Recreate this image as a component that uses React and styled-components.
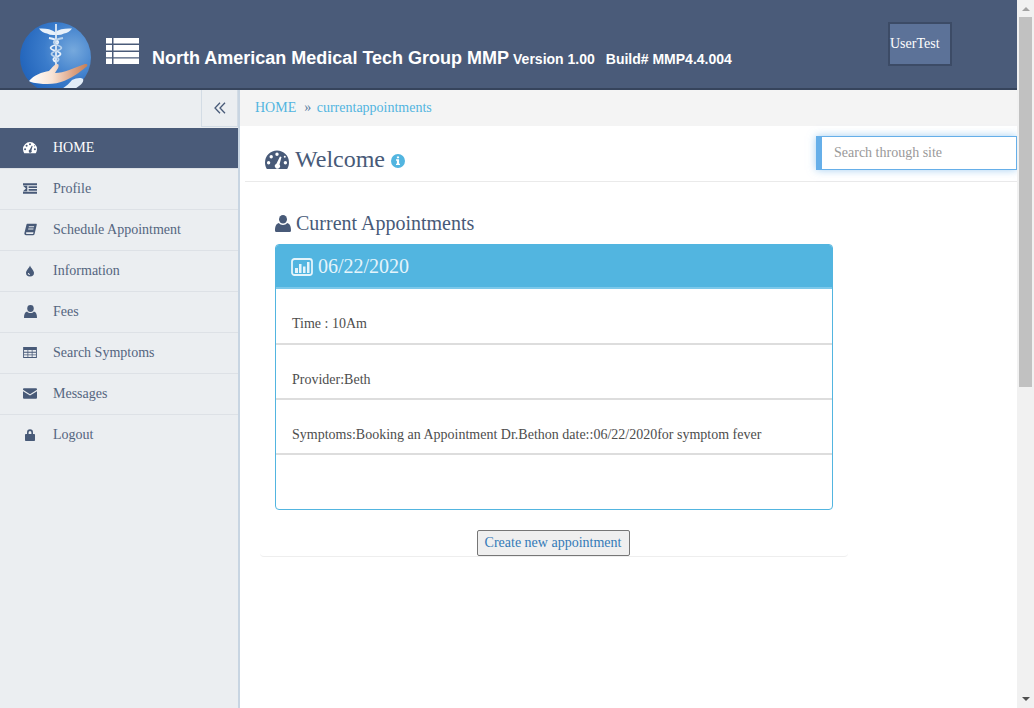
import React from 'react';
import styled, { createGlobalStyle } from 'styled-components';

const hole = (x, y, r) => `M${x - r} ${y}a${r} ${r} 0 1 0 ${2 * r} 0a${r} ${r} 0 1 0 ${-2 * r} 0z`;

const tableHoles = () => {
  let d = 'M0 0h15v12H0z';
  [3.4, 6.2, 9].forEach((y) => {
    [1, 5.6, 10.2].forEach((x) => {
      d += `M${x} ${y}h3.8v1.9h-3.8z`;
    });
  });
  return d;
};

const Gauge = ({ size }) => (
  <svg width={size} height={size * 0.82} viewBox="0 0 24 19.7" fill="currentColor">
    <path
      fillRule="evenodd"
      d={
        'M12 .5A12 12 0 0 0 0 12.5c0 2.6.8 5 2.1 7h19.8c1.3-2 2.1-4.4 2.1-7A12 12 0 0 0 12 .5z' +
        hole(3.6, 12.8, 1.7) +
        hole(6.2, 6.8, 1.7) +
        hole(12, 4.3, 1.7) +
        hole(19.8, 6.8, 1) +
        hole(20.4, 12.8, 1.7) +
        'M15 6.6l1.5.5-2 7.4a2.6 2.6 0 1 1-3.1-.8z'
      }
    />
  </svg>
);

const Indent = () => (
  <svg width="15" height="11" viewBox="0 0 15 11" fill="currentColor">
    <path d="M0 0h15v2H0zM6 3h9v2H6zM6 6h9v2H6zM0 9h15v2H0zM0 2.5h4.6v6H0l3.2-3z" />
  </svg>
);

const Book = () => (
  <svg width="13" height="13" viewBox="0 0 16 16" fill="currentColor">
    <path
      fillRule="evenodd"
      d="M4 1h10.800c.8 0 1.100.6.9 1.300L13 13.500c-.2.8-.8 1.500-1.700 1.500H2.500C1 15 .1 13.700.5 12.200L3 2c.2-.6.5-1 1-1zM6 4l-.3 1.200h6.500L12.500 4zM5.300 6.800L5 8h6.500l.3-1.200zM3.200 11.500c-.8 0-1.300 2 0 2h8l.5-2z"
    />
  </svg>
);

const Tint = () => (
  <svg width="8" height="12" viewBox="0 0 10 14" fill="currentColor">
    <path fillRule="evenodd" d="M5 0c.5 2.500 5 6 5 9.300A5 4.700 0 0 1 0 9.300C0 6 4.500 2.500 5 0zM2.300 9.500a2.600 2.600 0 0 0 2.600 2.600v-1.300a1.300 1.300 0 0 1-1.300-1.300z" />
  </svg>
);

const User = ({ size }) => (
  <svg width={size} height={size * 1.06} viewBox="0 0 16 17" fill="currentColor">
    <ellipse cx="8" cy="4.3" rx="4" ry="4.3" />
    <path d="M1.300 17C.5 17 0 16.500 0 15.500c0-3.500.8-6.800 3.800-7.500 1 1.300 2.500 2 4.200 2s3.200-.7 4.200-2c3 .7 3.800 4 3.800 7.500 0 1-.5 1.500-1.300 1.500z" />
  </svg>
);

const TableIcon = () => (
  <svg width="14" height="11" viewBox="0 0 15 12" fill="currentColor">
    <path fillRule="evenodd" d={tableHoles()} />
  </svg>
);

const Envelope = () => (
  <svg width="15" height="11" viewBox="0 0 15 11" fill="currentColor">
    <path d="M1 0h13c.6 0 1 .4 1 1v.6L7.500 6.200 0 1.600V1c0-.6.4-1 1-1zM0 3l7.500 4.600L15 3v7c0 .6-.4 1-1 1H1c-.6 0-1-.4-1-1z" />
  </svg>
);

const Lock = () => (
  <svg width="10" height="12" viewBox="0 0 10 12" fill="currentColor">
    <path
      fillRule="evenodd"
      d="M2 5V3.500a3 3.300 0 0 1 6 0V5h1.200c.5 0 .8.3.8.8v5.400c0 .5-.3.8-.8.8H.8c-.5 0-.8-.3-.8-.8V5.800c0-.5.3-.8.8-.8zM3.600 5h2.800V3.500a1.400 1.500 0 0 0-2.800 0z"
    />
  </svg>
);

const Info = () => (
  <svg width="14" height="14" viewBox="0 0 14 14" fill="#52b5e0">
    <path
      fillRule="evenodd"
      d="M7 0a7 7 0 1 0 0 14A7 7 0 0 0 7 0zM5.900 2.400h2.200v1.900H5.900zM5 5.300h3.100v4.400H9v1.400H5V9.700h.9V6.700H5z"
    />
  </svg>
);

const ChevronsLeft = () => (
  <svg width="12" height="12" viewBox="0 0 12 12" fill="none" stroke="currentColor" strokeWidth="1.3">
    <path d="M6 .8L1 6l5 5.200M11 .8L6 6l5 5.200" />
  </svg>
);

const ThList = () => (
  <MenuSvg viewBox="0 0 33 26" fill="#fff">
    <path d="M0 0h6v5.600H0zM7.500 0H33v5.600H7.500zM0 7h6v5.600H0zM7.500 7H33v5.600H7.500zM0 14h6v5.200H0zM7.500 14H33v5.200H7.500zM0 20.500h6V26H0zM7.500 20.500H33V26H7.500z" />
  </MenuSvg>
);

const ChartBox = () => (
  <svg width="22" height="18" viewBox="0 0 22 18" fill="none">
    <rect x="1" y="1" width="20" height="16" rx="2.5" stroke="currentColor" strokeWidth="1.8" />
    <path d="M4 10h3v5H4zM8 6h2.500v9H8zM12 8.500h2.500V15H12zM16 4h2.500v11H16z" fill="currentColor" />
  </svg>
);

const Logo = () => (
  <LogoSvg viewBox="0 0 71 71" aria-label="logo">
    <defs>
      <radialGradient id="sky" cx="75%" cy="40%" r="75%">
        <stop offset="0" stopColor="#76a9dd" />
        <stop offset="0.55" stopColor="#3b7ccb" />
        <stop offset="1" stopColor="#2466bc" />
      </radialGradient>
      <linearGradient id="skin" x1="0" y1="0" x2="1" y2="0">
        <stop offset="0" stopColor="#ffffff" />
        <stop offset="0.4" stopColor="#f8e3d5" />
        <stop offset="0.75" stopColor="#dca384" />
        <stop offset="1" stopColor="#c47f58" />
      </linearGradient>
    </defs>
    <circle cx="35.5" cy="35.5" r="35.5" fill="url(#sky)" />
    <path d="M52 58c4-2 9-3 11-1 1 2-1 5-4 7-5 4-10 6-15 6-3 0-5 0-7-1 6-2 11-6 15-11z" fill="#e3edf8" />
    <path d="M19 6.500c6-.5 12 .5 16 3.500 4-3 11-4 17-3.500-2 3-5 4.500-8 5-2 1-4 1.500-6 1.500h-5c-2 0-4-.5-6-1.500-3-.5-6-2-8-5z" fill="#e9f1fa" />
    <path d="M36 2v41" stroke="#dfe9f5" strokeWidth="1.8" />
    <path d="M29 16c11 2 11 5 6 7-6 2-6 4 1 6 6 2 6 4 0 6-4 1.500-3 3.500 0 5" fill="none" stroke="#eaf2fb" strokeWidth="1.8" />
    <path d="M43 16c-11 2-11 5-6 7 6 2 6 4-1 6-6 2-6 4 0 6 4 1.500 3 3.500 0 5" fill="none" stroke="#b9d2ec" strokeWidth="1.8" />
    <path
      d="M9 59C14 53 22 50 29 49c3-3 5-7 9-7 2 2-1 6-3 9 9 0 19-5 30-9 3-.5 3 2 1 3-6 5-15 12-25 15-6 2-12 2-18 2-5-.5-11-1-14-3z"
      fill="url(#skin)"
    />
  </LogoSvg>
);

const menu = [
  { label: 'HOME', icon: <Gauge size={16} />, active: true },
  { label: 'Profile', icon: <Indent /> },
  { label: 'Schedule Appointment', icon: <Book /> },
  { label: 'Information', icon: <Tint /> },
  { label: 'Fees', icon: <User size={13} /> },
  { label: 'Search Symptoms', icon: <TableIcon /> },
  { label: 'Messages', icon: <Envelope /> },
  { label: 'Logout', icon: <Lock /> },
];

const rows = [
  'Time : 10Am',
  'Provider:Beth',
  'Symptoms:Booking an Appointment Dr.Bethon date::06/22/2020for symptom fever',
  '',
];

const App = () => {
  return (
    <Page>
      <GlobalStyle />
      <Main>
        <Header>
          <Logo />
          <ThList />
          <Title>
            North American Medical Tech Group MMP
            <Version>Version 1.00</Version>
            <Version $wide>Build# MMP4.4.004</Version>
          </Title>
          <UserBox>UserTest</UserBox>
        </Header>
        <Body>
          <Sidebar>
            <ToggleRow>
              <ToggleButton>
                <ChevronsLeft />
              </ToggleButton>
            </ToggleRow>
            <Nav>
              {menu.map((item) => (
                <NavItem key={item.label} $active={item.active}>
                  <NavIcon $active={item.active}>{item.icon}</NavIcon>
                  {item.label}
                </NavItem>
              ))}
            </Nav>
          </Sidebar>
          <Content>
            <Breadcrumb>
              <span>HOME</span>
              <Sep>»</Sep>
              <span>currentappointments</span>
            </Breadcrumb>
            <PageHead>
              <PageTitle>
                <Gauge size={24} />
                <span>Welcome</span>
                <InfoWrap>
                  <Info />
                </InfoWrap>
              </PageTitle>
              <SearchBox placeholder="Search through site" />
            </PageHead>
            <Section>
              <SectionTitle>
                <User size={16} />
                Current Appointments
              </SectionTitle>
              <Card>
                <CardHead>
                  <ChartBox />
                  06/22/2020
                </CardHead>
                {rows.map((row, i) => (
                  <CardRow key={i} $last={i === rows.length - 1}>
                    {row}
                  </CardRow>
                ))}
              </Card>
              <Actions>
                <CreateButton>Create new appointment</CreateButton>
              </Actions>
            </Section>
          </Content>
        </Body>
      </Main>
      <Scrollbar>
        <ArrowUp />
        <Thumb />
        <ArrowDown />
      </Scrollbar>
    </Page>
  );
};

const GlobalStyle = createGlobalStyle`
  html, body {
    margin: 0;
    padding: 0;
    height: 708px;
    overflow: hidden;
    background: #fff;
  }
  * {
    box-sizing: border-box;
  }
`;

const Page = styled.div`
  display: flex;
  width: 1034px;
  height: 708px;
  font-family: "Liberation Serif", "Times New Roman", serif;
  font-size: 14px;
  color: #485a78;
  overflow: hidden;
`;

const Main = styled.div`
  flex: 1;
  min-width: 0;
  display: flex;
  flex-direction: column;
`;

const Header = styled.header`
  flex: none;
  height: 90px;
  display: flex;
  align-items: flex-start;
  overflow: hidden;
  background: #4a5b79;
  border-bottom: 2px solid #36445c;
`;

const LogoSvg = styled.svg`
  width: 71px;
  height: 71px;
  margin: 22px 0 0 20px;
  flex: none;
`;

const MenuSvg = styled.svg`
  width: 33px;
  height: 26px;
  margin: 38px 0 0 15px;
  flex: none;
`;

const Title = styled.div`
  margin: 48px 0 0 13px;
  width: 736px;
  flex: none;
  font-family: "Liberation Sans", Arial, sans-serif;
  font-weight: bold;
  font-size: 18px;
  line-height: 21px;
  color: #fff;
  white-space: nowrap;
`;

const Version = styled.span`
  font-size: 14px;
  margin-left: ${(p) => (p.$wide ? '11px' : '4px')};
`;

const UserBox = styled.div`
  width: 64px;
  height: 44px;
  margin: 22px 0 0 0;
  flex: none;
  display: flex;
  align-items: center;
  background: #5c7298;
  border: 2px solid #3c4b66;
  color: #fff;
  font-size: 14px;
`;

const Body = styled.div`
  flex: 1;
  display: flex;
  min-height: 0;
`;

const Sidebar = styled.aside`
  flex: 0 0 240px;
  background: #ebeef1;
  border-right: 2px solid #c8d5e2;
`;

const ToggleRow = styled.div`
  height: 38px;
  display: flex;
  justify-content: flex-end;
`;

const ToggleButton = styled.div`
  width: 37px;
  height: 37px;
  display: flex;
  align-items: center;
  justify-content: center;
  border: 1px solid #d3dce5;
  border-top: none;
  color: #485a78;
`;

const Nav = styled.nav`
  display: flex;
  flex-direction: column;
`;

const NavItem = styled.div`
  height: 41px;
  display: flex;
  align-items: center;
  padding-bottom: 1px;
  background: ${(p) => (p.$active ? '#4a5b79' : 'transparent')};
  color: ${(p) => (p.$active ? '#fff' : '#54657f')};
  border-bottom: 1px solid #dde1e6;
  &:last-child {
    border-bottom: none;
  }
`;

const NavIcon = styled.span`
  width: 53px;
  padding-left: 23px;
  padding-right: 16px;
  display: flex;
  align-items: center;
  justify-content: center;
  flex: none;
  color: ${(p) => (p.$active ? '#fff' : '#485a78')};
`;

const Content = styled.main`
  flex: 1;
  min-width: 0;
  display: flex;
  flex-direction: column;
`;

const Breadcrumb = styled.div`
  height: 36px;
  padding-left: 15px;
  display: flex;
  align-items: center;
  background: #f4f4f4;
  color: #52b5e0;
  font-size: 14px;
`;

const Sep = styled.span`
  margin: 0 5.5px 0 8px;
  color: #5d7fa0;
`;

const PageHead = styled.div`
  height: 56px;
  margin-left: 5px;
  padding-left: 20px;
  display: flex;
  align-items: flex-start;
  justify-content: space-between;
  border-bottom: 1px solid #eaeaea;
`;

const PageTitle = styled.h1`
  margin: 20px 0 0;
  display: flex;
  align-items: center;
  gap: 6px;
  font-weight: normal;
  font-size: 24px;
  line-height: 27px;
  color: #485a78;
`;

const InfoWrap = styled.span`
  display: flex;
  margin-top: 2px;
`;

const SearchBox = styled.input`
  width: 201px;
  height: 34px;
  margin-top: 10px;
  padding: 0 12px;
  border: 1px solid #66afe9;
  border-left: 6px solid #66afe9;
  box-shadow: 0 0 8px rgba(102, 175, 233, 0.6);
  outline: none;
  font-family: inherit;
  font-size: 14px;
  color: #555;
  &::placeholder {
    color: #999;
    opacity: 1;
  }
`;

const Section = styled.section`
  margin-left: 20px;
  width: 588px;
  padding: 30px 15px 0 15px;
  height: 375px;
  border-bottom: 1px solid #eeeeee;
  border-radius: 0 0 4px 4px;
`;

const SectionTitle = styled.h2`
  margin: 0 0 9px;
  display: flex;
  align-items: center;
  gap: 5px;
  font-weight: normal;
  font-size: 20px;
  line-height: 23px;
  color: #485a78;
`;

const Card = styled.div`
  width: 558px;
  height: 266px;
  border: 1px solid #52b5e0;
  border-radius: 4px;
  overflow: hidden;
`;

const CardHead = styled.div`
  height: 45px;
  margin: -1px -1px 0;
  padding: 2px 0 0 16px;
  display: flex;
  align-items: center;
  gap: 5px;
  background: #52b5e0;
  border-bottom: 2px solid #7cc8ea;
  color: #e4f4fb;
  font-size: 20px;
`;

const CardRow = styled.div`
  height: ${(p) => (p.$last ? '54px' : '55px')};
  padding: 26px 16px 0;
  font-size: 14px;
  line-height: 17px;
  color: #4d4d4d;
  border-bottom: ${(p) => (p.$last ? 'none' : '2px solid #dddddd')};
  &:nth-child(2) {
    height: 56px;
  }
`;

const Actions = styled.div`
  margin-top: 20px;
  padding-right: 2px;
  display: flex;
  justify-content: center;
`;

const CreateButton = styled.button`
  height: 26px;
  width: 153px;
  padding: 0;
  background: #efefef;
  border: 1px solid #767676;
  border-radius: 2px;
  color: #337ab7;
  font-family: inherit;
  font-size: 14px;
`;

const Scrollbar = styled.div`
  flex: 0 0 17px;
  display: flex;
  flex-direction: column;
  align-items: center;
  background: #f1f1f1;
`;

const ArrowUp = styled.div`
  flex: none;
  margin: 7px 0 6px;
  width: 0;
  height: 0;
  border-left: 4px solid transparent;
  border-right: 4px solid transparent;
  border-bottom: 4px solid #a3a3a3;
`;

const Thumb = styled.div`
  width: 13px;
  height: 370px;
  background: #c1c1c1;
  flex: none;
`;

const ArrowDown = styled.div`
  flex: none;
  margin: auto 0 7px;
  width: 0;
  height: 0;
  border-left: 4px solid transparent;
  border-right: 4px solid transparent;
  border-top: 4px solid #505050;
`;

export default App;
